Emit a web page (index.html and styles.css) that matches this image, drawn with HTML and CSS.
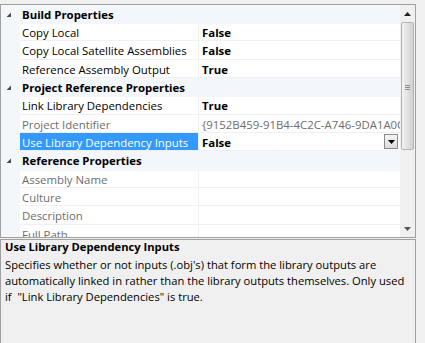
FILE: index.html
```html
<!DOCTYPE html>
<html>
<head>
<meta charset="utf-8">
<link rel="stylesheet" href="styles.css">
</head>
<body>
<div class="wrap">
  <div class="grid">
    <div class="rows">
      <div class="row cat"><span class="gut"><svg width="6" height="6" viewBox="0 0 6 6"><path d="M5 0.5V5H0.5Z" fill="#4a4a4a"/></svg></span><span class="name">Build Properties</span><span class="val"></span></div>
      <div class="row"><span class="gut"></span><span class="name">Copy Local</span><span class="val">False</span></div>
      <div class="row"><span class="gut"></span><span class="name">Copy Local Satellite Assemblies</span><span class="val">False</span></div>
      <div class="row"><span class="gut"></span><span class="name">Reference Assembly Output</span><span class="val">True</span></div>
      <div class="row cat"><span class="gut"><svg width="6" height="6" viewBox="0 0 6 6"><path d="M5 0.5V5H0.5Z" fill="#4a4a4a"/></svg></span><span class="name">Project Reference Properties</span><span class="val"></span></div>
      <div class="row"><span class="gut"></span><span class="name">Link Library Dependencies</span><span class="val">True</span></div>
      <div class="row ro"><span class="gut"></span><span class="name">Project Identifier</span><span class="val">{9152B459-91B4-4C2C-A746-9DA1A0C8D1E2}</span></div>
      <div class="row sel"><span class="gut"></span><span class="name">Use Library Dependency Inputs</span><span class="val">False<span class="drop"><svg width="7" height="4" viewBox="0 0 7 4"><path d="M0 0H7L3.5 4Z" fill="#000"/></svg></span></span></div>
      <div class="row cat"><span class="gut"><svg width="6" height="6" viewBox="0 0 6 6"><path d="M5 0.5V5H0.5Z" fill="#4a4a4a"/></svg></span><span class="name">Reference Properties</span><span class="val"></span></div>
      <div class="row ro"><span class="gut"></span><span class="name">Assembly Name</span><span class="val"></span></div>
      <div class="row ro"><span class="gut"></span><span class="name">Culture</span><span class="val"></span></div>
      <div class="row ro"><span class="gut"></span><span class="name">Description</span><span class="val"></span></div>
      <div class="row ro"><span class="gut"></span><span class="name">Full Path</span><span class="val"></span></div>
    </div>
    <div class="scroll">
      <div class="arrow"><svg width="7" height="4" viewBox="0 0 7 4"><path d="M0 4H7L3.5 0Z" fill="#222"/></svg></div>
      <div class="thumb"><div class="grip"><i></i><i></i><i></i></div></div>
      <div class="track"></div>
      <div class="arrow"><svg width="7" height="4" viewBox="0 0 7 4"><path d="M0 0H7L3.5 4Z" fill="#555"/></svg></div>
    </div>
  </div>
  <div class="desc">
    <div class="title">Use Library Dependency Inputs</div>
    <div class="text">Specifies whether or not inputs (.obj's) that form the library outputs are<br>automatically linked in rather than the library outputs themselves. Only used<br>if &nbsp;"Link Library Dependencies" is true.</div>
  </div>
</div>
</body>
</html>
```
FILE: styles.css
```css
html, body {
  margin: 0;
  padding: 0;
  background: #f0f0f0;
  width: 425px;
  height: 343px;
  overflow: hidden;
  font-family: "Open Sans", "Noto Sans", sans-serif;
  font-size: 11.4px;
  color: #000;
}
.wrap {
  padding-top: 4px;
  width: 416px;
}
.grid {
  display: flex;
  height: 232px;
  border: 1px solid #a0a0a0;
  background: #fff;
}
.rows {
  flex: 1;
  overflow: hidden;
}
.row {
  display: grid;
  grid-template-columns: 19px 179px 1fr;
  height: 18px;
  line-height: 17px;
  white-space: nowrap;
}
.row:nth-child(3n) {
  height: 19px;
  line-height: 18px;
}
.gut {
  background: #f3f6fb;
  display: flex;
  align-items: center;
  justify-content: center;
  padding-right: 3px;
}
.name, .val {
  padding-top: 1px;
  box-sizing: border-box;
}
.name {
  padding-left: 2px;
  border-right: 1px solid #f0f0f0;
  border-bottom: 1px solid #f0f0f0;
  overflow: hidden;
}
.val {
  padding-left: 3px;
  font-weight: 700;
  border-bottom: 1px solid #f0f0f0;
  overflow: hidden;
  position: relative;
}
.cat .name, .cat .val {
  background: #f3f6fb;
  font-weight: 700;
  border-color: #f3f6fb;
}
.cat .name { overflow: visible; }
.ro .name, .ro .val {
  color: #6d6d6d;
  font-weight: 400;
}
.sel .name {
  background: #3399ff;
  color: #fff;
}
.drop {
  position: absolute;
  right: 2px;
  top: 1px;
  width: 14px;
  height: 15px;
  box-sizing: border-box;
  border: 1px solid #8a8a8a;
  background: linear-gradient(#f6f6f6, #dcdcdc);
  display: flex;
  align-items: center;
  justify-content: center;
}
.scroll {
  width: 15px;
  background: #f0f0f0;
  display: flex;
  flex-direction: column;
}
.arrow {
  height: 17px;
  display: flex;
  align-items: center;
  justify-content: center;
}
.thumb {
  height: 128px;
  margin: 0 1px;
  box-sizing: border-box;
  border: 1px solid #b4b4b4;
  border-radius: 2px;
  background: linear-gradient(90deg, #f2f2f2, #e2e2e2 50%, #d0d0d0);
  display: flex;
  align-items: center;
  justify-content: center;
}
.grip {
  display: flex;
  flex-direction: column;
  gap: 1px;
  margin-top: 2px;
}
.grip i {
  display: block;
  width: 5px;
  height: 1px;
  background: #8a8a8a;
}
.track {
  flex: 1;
}
.desc {
  margin-top: 1px;
  height: 120px;
  border: 1px solid #a0a0a0;
  border-bottom: none;
  padding: 0 4px;
  font-size: 11.2px;
}
.title {
  font-weight: 700;
  line-height: 16px;
  margin-top: -1px;
  margin-bottom: 2px;
}
.text {
  line-height: 16px;
  white-space: nowrap;
}
```
